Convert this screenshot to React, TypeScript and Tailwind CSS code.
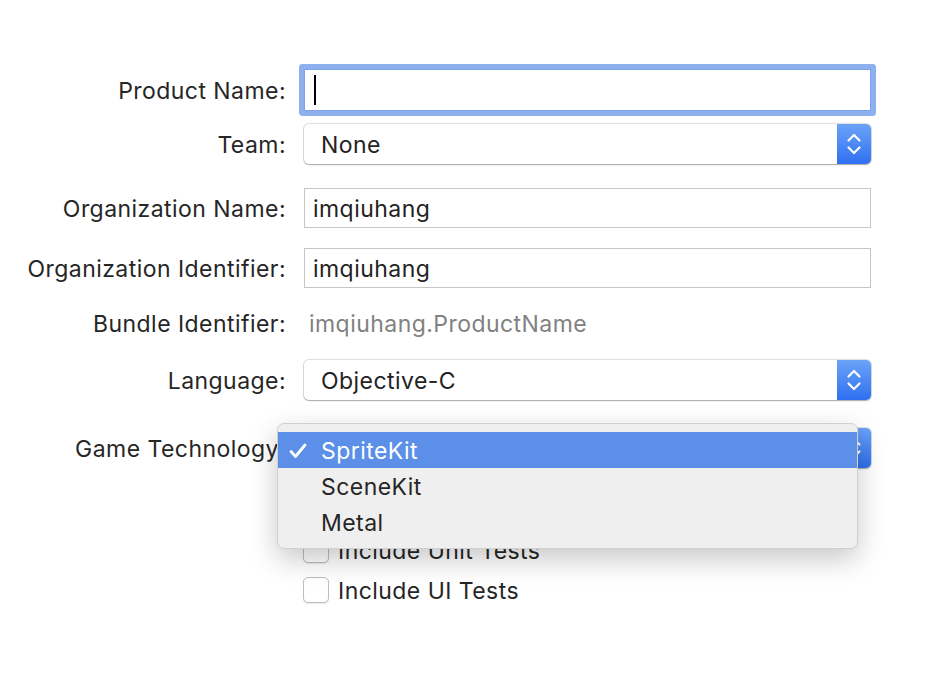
import React from "react";

const font = { fontFamily: "Inter, 'Noto Sans', 'Liberation Sans', sans-serif" };

function Stepper() {
  return (
    <div className="flex h-full w-[34px] shrink-0 flex-col items-center justify-center rounded-r-[5px] bg-gradient-to-b from-[#6ba3f8] to-[#2f6ff0]">
      <svg width="16" height="26" viewBox="0 0 16 26" fill="none">
        <path d="M2.5 9.5 L8 4 L13.5 9.5" stroke="white" strokeWidth="2.2" strokeLinecap="round" strokeLinejoin="round" />
        <path d="M2.5 16.5 L8 22 L13.5 16.5" stroke="white" strokeWidth="2.2" strokeLinecap="round" strokeLinejoin="round" />
      </svg>
    </div>
  );
}

function Popup({ value }: { value: string }) {
  return (
    <div className="flex h-full w-[567px] items-stretch rounded-[5px] bg-white shadow-[0_0_0_1px_rgba(0,0,0,0.12),0_1px_1.5px_rgba(0,0,0,0.25)]">
      <div className="flex flex-1 items-center pl-[17px] pt-[2px] text-[23px] tracking-[0.45px] text-[#232323]">{value}</div>
      <Stepper />
    </div>
  );
}

function Field({ value }: { value: string }) {
  return (
    <div className="flex h-full w-[567px] items-center border border-[#c6c6c6] bg-white pl-[8px] pt-[2px] text-[23px] tracking-[0.45px] text-[#232323]">
      {value}
    </div>
  );
}

function Row({ label, mt, h, children, relative }: { label: string; mt: string; h: string; children?: React.ReactNode; relative?: boolean }) {
  return (
    <div className={`flex items-center ${mt} ${h} ${relative ? "relative" : ""}`}>
      <div className="w-[286px] shrink-0 pt-[3px] text-right text-[23px] tracking-[0.45px] text-[#262626]">{label}</div>
      <div className="ml-[18px] h-full">{children}</div>
    </div>
  );
}

function Checkbox({ label, mt }: { label: string; mt: string }) {
  return (
    <div className={`flex h-[26px] items-center ${mt}`}>
      <div className="ml-[303px] h-[26px] w-[26px] rounded-[5px] border border-[#bdbdbd] bg-white shadow-[0_1px_1px_rgba(0,0,0,0.08)]" />
      <div className="ml-[9px] pt-[2px] text-[23px] tracking-[0.45px] text-[#262626]">{label}</div>
    </div>
  );
}

export default function App() {
  return (
    <div className="relative h-[676px] w-[952px] overflow-hidden bg-white" style={font}>
      <div className="flex flex-col pt-[69px]">
        <Row label="Product Name:" mt="" h="h-[42px]">
          <div className="relative flex h-full w-[567px] items-center rounded-[1px] border border-[#7ea2ea] bg-white shadow-[0_0_0_5px_#8db0ef]">
            <div className="ml-[9px] h-[30px] w-[2px] bg-black" />
          </div>
        </Row>
        <Row label="Team:" mt="mt-[13px]" h="h-[40px]">
          <Popup value="None" />
        </Row>
        <Row label="Organization Name:" mt="mt-[24px]" h="h-[40px]">
          <Field value="imqiuhang" />
        </Row>
        <Row label="Organization Identifier:" mt="mt-[20px]" h="h-[40px]">
          <Field value="imqiuhang" />
        </Row>
        <Row label="Bundle Identifier:" mt="mt-[15px]" h="h-[40px]">
          <div className="flex h-full items-center pl-[5px] pt-[2px] text-[23px] tracking-[0.45px] text-[#818181]">imqiuhang.ProductName</div>
        </Row>
        <Row label="Language:" mt="mt-[17px]" h="h-[40px]">
          <Popup value="Objective-C" />
        </Row>
        <Row label="Game Technology:" mt="mt-[28px]" h="h-[40px]" relative>
          <Popup value="" />
          <div className="absolute left-[277px] top-[-5px] z-10 w-[581px] rounded-[7px] border border-[#d0d0d0] bg-[#efefef] pb-[8px] pt-[8px] shadow-[0_10px_28px_rgba(0,0,0,0.22)]">
            <div className="flex h-[36px] items-center bg-[#5b8fe8] pt-[2px] text-[23px] tracking-[0.45px] text-white">
              <div className="flex w-[43px] shrink-0 items-center pl-[11px]">
                <svg width="18" height="16" viewBox="0 0 18 16" fill="none">
                  <path d="M2 8.5 L6.5 13.5 L16 2" stroke="white" strokeWidth="2.8" strokeLinecap="round" strokeLinejoin="round" />
                </svg>
              </div>
              <span>SpriteKit</span>
            </div>
            <div className="flex h-[36px] items-center pt-[2px] text-[23px] tracking-[0.45px] text-[#262626]">
              <div className="w-[43px] shrink-0" />
              <span>SceneKit</span>
            </div>
            <div className="flex h-[36px] items-center pt-[2px] text-[23px] tracking-[0.45px] text-[#262626]">
              <div className="w-[43px] shrink-0" />
              <span>Metal</span>
            </div>
          </div>
        </Row>
        <Checkbox label="Include Unit Tests" mt="mt-[69px]" />
        <Checkbox label="Include UI Tests" mt="mt-[14px]" />
      </div>
    </div>
  );
}
